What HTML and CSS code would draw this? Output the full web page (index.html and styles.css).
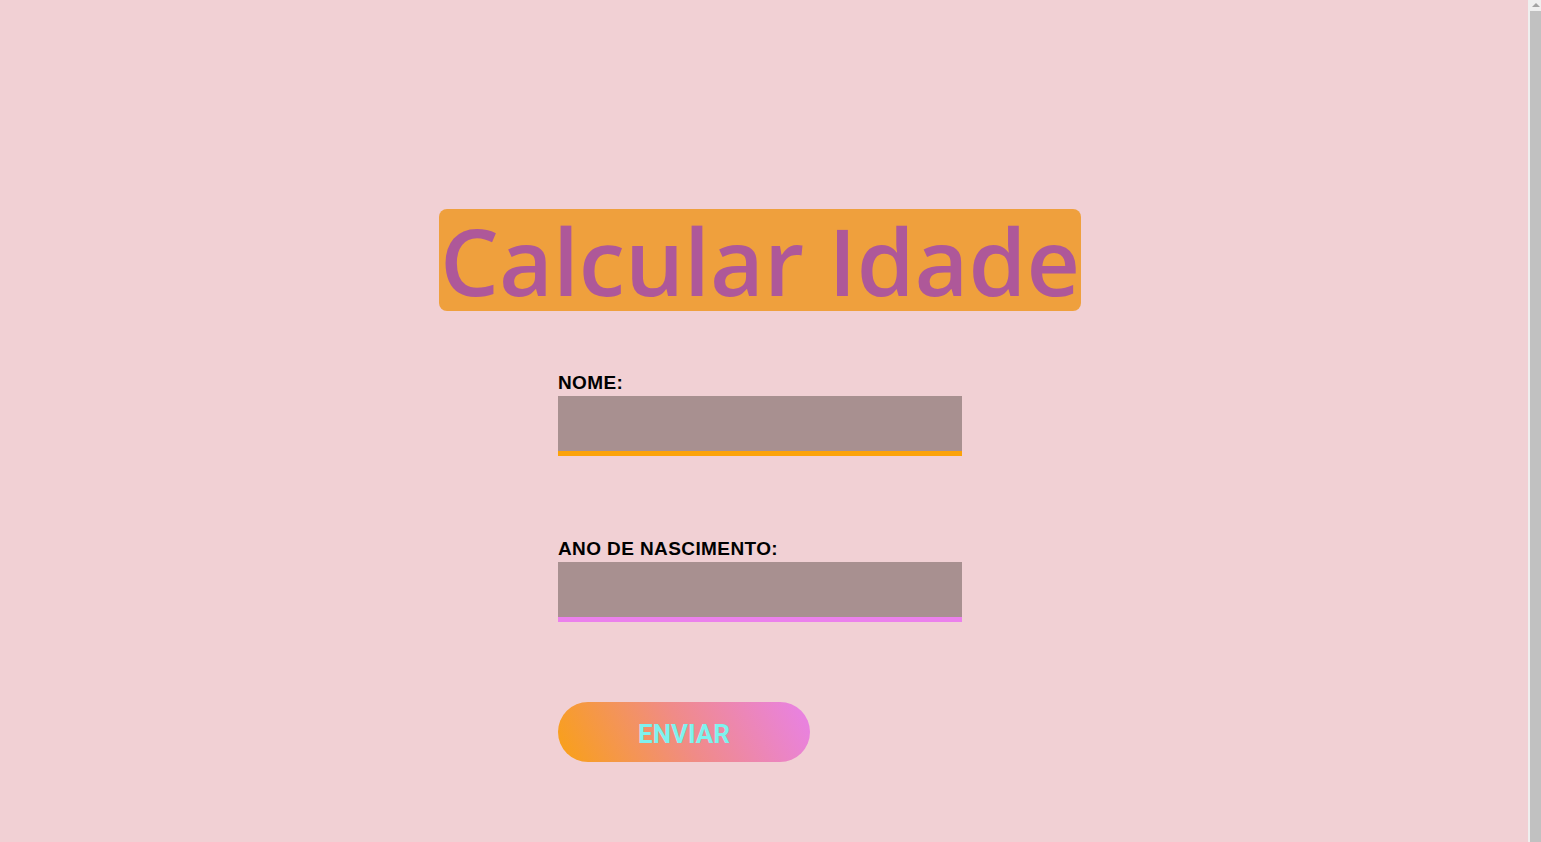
FILE: index.html
```html
<!DOCTYPE html>
<html lang="pt-BR">
<head>
<meta charset="utf-8">
<title>Calcular Idade</title>
<link rel="stylesheet" href="styles.css">
</head>
<body>
<div class="shell">
  <main class="page">
    <h1 class="title">Calcular Idade</h1>
    <form class="form">
      <div class="field">
        <label class="label" for="nome">NOME:</label>
        <input class="input input-orange" id="nome" type="text">
      </div>
      <div class="field">
        <label class="label" for="ano">ANO DE NASCIMENTO:</label>
        <input class="input input-violet" id="ano" type="text">
      </div>
      <button class="button" type="button">ENVIAR</button>
    </form>
  </main>
  <div class="scrollbar" aria-hidden="true">
    <div class="scroll-up"><span class="arrow"></span></div>
    <div class="scroll-thumb"></div>
  </div>
</div>
</body>
</html>
```

FILE: styles.css
```css
html, body {
  margin: 0;
  padding: 0;
}
body {
  background: #f1d0d4;
  font-family: "Liberation Sans", Arial, sans-serif;
  overflow: hidden;
}
.shell {
  display: grid;
  grid-template-columns: 1fr 13px;
  height: 842px;
}
.page {
  display: flex;
  flex-direction: column;
  align-items: center;
  padding: 209px 8px 0 0;
}
.scrollbar {
  background: #efefef;
  display: flex;
  flex-direction: column;
}
.scroll-up {
  height: 11px;
  display: flex;
  justify-content: center;
  align-items: flex-end;
  padding-left: 2px;
}
.arrow {
  width: 0;
  height: 0;
  border-left: 4px solid transparent;
  border-right: 4px solid transparent;
  border-bottom: 4px solid #a3a3a3;
  margin-bottom: 4px;
}
.scroll-thumb {
  flex: 1;
  margin-left: 2px;
  background: #c1c1c1;
}
.title {
  margin: 0;
  background: #efa03d;
  color: #ae5899;
  border-radius: 8px;
  font-family: "Open Sans", sans-serif;
  font-weight: 600;
  font-size: 93px;
  line-height: 102px;
  height: 102px;
  padding: 0 1px;
}
.form {
  width: 404px;
  margin-top: 59px;
  display: flex;
  flex-direction: column;
}
.field {
  display: flex;
  flex-direction: column;
  margin-bottom: 80px;
}
.label {
  font-family: "Liberation Sans", Arial, sans-serif;
  font-weight: 700;
  font-size: 19px;
  line-height: 26px;
  color: #000;
  letter-spacing: 0.4px;
}
.input {
  box-sizing: border-box;
  width: 404px;
  height: 60px;
  border: 0;
  border-bottom: 5px solid #fba20a;
  background: #a89090;
  outline: none;
  margin: 0;
  padding: 0 10px;
}
.input-violet {
  border-bottom-color: #eb80ec;
}
.button {
  width: 252px;
  height: 60px;
  border: 0;
  border-radius: 30px;
  background: linear-gradient(62deg, #f9a114 0%, #f08b88 50%, #e881e8 100%);
  color: #7ff2ee;
  font-family: Roboto, "Liberation Sans", sans-serif;
  font-weight: 700;
  font-size: 26px;
  padding: 3px 0 0;
  cursor: pointer;
}
```
